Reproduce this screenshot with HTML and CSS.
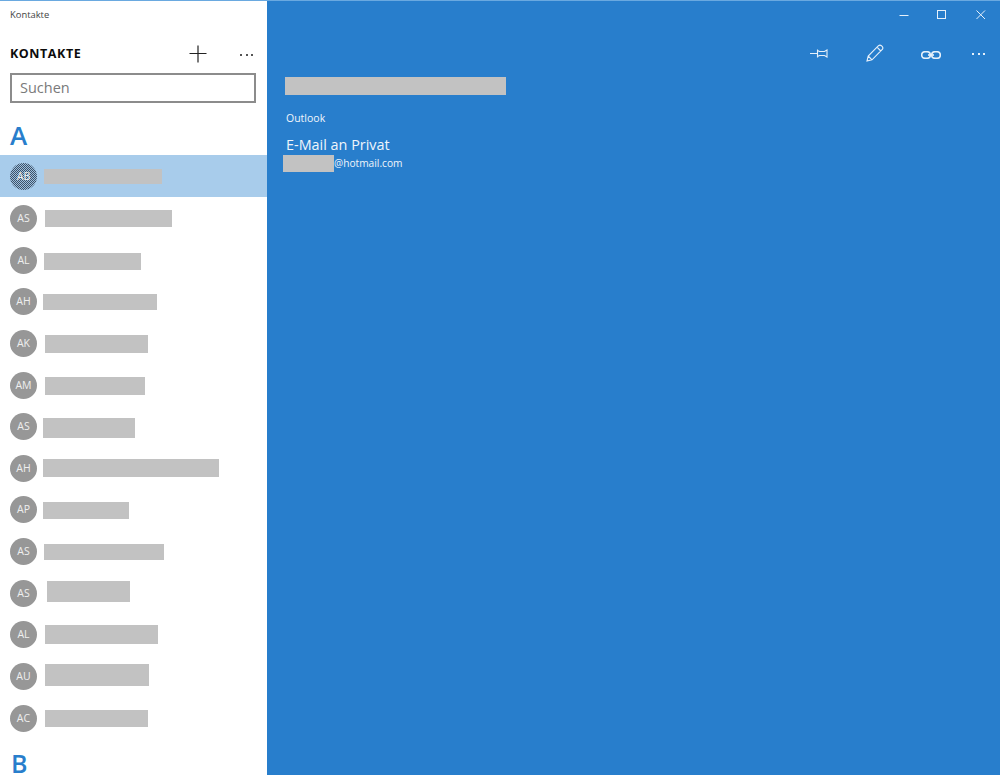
FILE: index.html
```html
<!DOCTYPE html>
<html lang="de">
<head>
<meta charset="utf-8">
<title>Kontakte</title>
<link rel="stylesheet" href="styles.css">
</head>
<body>
<div class="app">
  <aside class="sidebar">
    <div class="app-title">Kontakte</div>
    <header class="list-head">
      <h1 class="list-title">KONTAKTE</h1>
      <svg class="add-icon" width="18" height="18" viewBox="0 0 18 18"><path d="M9 0.5V17.5M0.5 8.5H17.5"/></svg>
      <span class="dots dots-dark"><i></i><i></i><i></i></span>
    </header>
    <div class="search">Suchen</div>
    <h2 class="letter letter-a">A</h2>
    <ul class="contacts">
      <li class="contact selected"><span class="avatar">AB</span><span class="bar b1"></span></li>
      <li class="contact"><span class="avatar">AS</span><span class="bar b2"></span></li>
      <li class="contact"><span class="avatar">AL</span><span class="bar b3"></span></li>
      <li class="contact"><span class="avatar">AH</span><span class="bar b4"></span></li>
      <li class="contact"><span class="avatar">AK</span><span class="bar b5"></span></li>
      <li class="contact"><span class="avatar">AM</span><span class="bar b6"></span></li>
      <li class="contact"><span class="avatar">AS</span><span class="bar b7"></span></li>
      <li class="contact"><span class="avatar">AH</span><span class="bar b8"></span></li>
      <li class="contact"><span class="avatar">AP</span><span class="bar b9"></span></li>
      <li class="contact"><span class="avatar">AS</span><span class="bar b10"></span></li>
      <li class="contact"><span class="avatar">AS</span><span class="bar b11"></span></li>
      <li class="contact"><span class="avatar">AL</span><span class="bar b12"></span></li>
      <li class="contact"><span class="avatar">AU</span><span class="bar b13"></span></li>
      <li class="contact"><span class="avatar">AC</span><span class="bar b14"></span></li>
    </ul>
    <h2 class="letter letter-b">B</h2>
  </aside>
  <main class="detail">
    <div class="window-controls">
      <span class="win-btn"><svg width="10" height="10" viewBox="0 0 10 10"><path d="M0.5 5.5H9.5"/></svg></span>
      <span class="win-btn"><svg width="10" height="10" viewBox="0 0 10 10"><rect x="0.5" y="0.5" width="8" height="8"/></svg></span>
      <span class="win-btn"><svg width="10" height="10" viewBox="0 0 10 10"><path d="M0.5 0.5L9 9M9 0.5L0.5 9"/></svg></span>
    </div>
    <div class="toolbar">
      <span class="tool tool-pin"><svg width="18" height="11" viewBox="0 0 18 11"><path d="M0 5.5H7.5M7.5 1.5V9.5M7.5 2.5L9.5 3.5H14.5L17 2V9L14.5 7.5H9.5L7.5 8.5"/></svg></span>
      <span class="tool tool-edit"><svg width="18" height="18" viewBox="0 0 18 18"><path d="M1 17L2.2 12L12.5 1.7Q14 0.6 15.4 1.7L16.3 2.6Q17.4 4 16.3 5.5L6 15.8ZM2.2 12L6 15.8M11 3.2L14.8 7"/></svg></span>
      <span class="tool tool-link"><svg width="20" height="8" viewBox="0 0 20 8"><rect x="0.7" y="0.7" width="8.6" height="6.6" rx="3.3"/><rect x="10.7" y="0.7" width="8.6" height="6.6" rx="3.3"/><path d="M7 4H13"/></svg></span>
      <span class="tool tool-more"><span class="dots"><i></i><i></i><i></i></span></span>
    </div>
    <div class="profile">
      <div class="bar name-bar"></div>
      <div class="source">Outlook</div>
      <div class="mail-label">E-Mail an Privat</div>
      <div class="mail-line"><span class="bar mail-bar"></span><span>@hotmail.com</span></div>
    </div>
  </main>
</div>
</body>
</html>
```
FILE: styles.css
```css
* { box-sizing: border-box; }
html, body { margin: 0; height: 100%; overflow: hidden; }
body { font-family: "Open Sans", "Noto Sans", "Liberation Sans", sans-serif; background: #fff; }
.app { display: flex; height: 775px; width: 1000px; }

.sidebar { width: 267px; flex: none; background: #fff; border-top: 1px solid #6aa9e0; overflow: hidden; color: #111; }
.app-title { height: 35px; padding: 7px 0 0 10px; font-size: 9.4px; line-height: 13px; color: #444; }
.list-head { height: 37px; display: flex; align-items: center; padding: 0 14px 0 10px; }
.list-title { margin: 0 0 2px; font-size: 12.5px; font-weight: 700; letter-spacing: 0.55px; line-height: 16px; flex: 1; color: #0c0c0c; }
.add-icon { fill: none; stroke: #222; stroke-width: 1.2; margin: 0 33px 1px 0; }
.dots { display: inline-flex; gap: 3.5px; }
.dots i { width: 2px; height: 2px; background: #e6f0fa; }
.dots-dark i { background: #555; }
.search { margin: 0 11px 0 10px; height: 30px; border: 2px solid #8c8c8c; padding-left: 8px; font-size: 14.5px; line-height: 26px; color: #7a7a7a; }
.letter { margin: 0; color: #287ecc; font-weight: 600; font-size: 26px; }
.letter-a { height: 52px; padding: 17px 0 0 10px; line-height: 30px; }
.letter-b { height: 37px; padding: 15px 0 0 11px; line-height: 20px; font-size: 25px; }

.contacts { list-style: none; margin: 0; padding: 0; display: grid; grid-auto-rows: 41.65px; }
.contact { display: flex; align-items: center; padding: 2px 0 0 10px; }
.contact.selected { background: #a8cceb; }
.avatar { flex: none; width: 27px; height: 27px; border-radius: 50%; background: #979797; color: #efefef; font-size: 10.5px; line-height: 27px; text-align: center; }
.selected .avatar { background: repeating-conic-gradient(#3f5368 0 25%, #9dbfdf 0 50%) 0 0 / 2px 2px; }
.bar { display: block; background: #c2c2c2; flex: none; }

.b1 { margin: 0 0 0 7px; width: 118px; height: 15px; }
.b2 { margin: 1px 0 0 8px; width: 127px; height: 17px; }
.b3 { margin: 2px 0 0 7px; width: 97px; height: 17px; }
.b4 { margin: 0 0 0 6px; width: 114px; height: 16px; }
.b5 { margin: 2px 0 0 8px; width: 103px; height: 18px; }
.b6 { margin: 2px 0 0 8px; width: 100px; height: 18px; }
.b7 { margin: 3px 0 0 6px; width: 92px; height: 20px; }
.b8 { margin: 0 0 0 6px; width: 176px; height: 18px; }
.b9 { margin: 2px 0 0 6px; width: 86px; height: 17px; }
.b10 { margin: 0 0 0 7px; width: 120px; height: 16px; }
.b11 { margin: 0 0 4px 10px; width: 83px; height: 21px; }
.b12 { margin: 0 0 0 8px; width: 113px; height: 19px; }
.b13 { margin: 0 0 4px 8px; width: 104px; height: 22px; }
.b14 { margin: 1px 0 0 8px; width: 103px; height: 17px; }

.detail { flex: 1; background: #287ecc; border-top: 1px solid #6aa9e0; color: #f0f5fb; }
.window-controls { display: flex; height: 27px; justify-content: flex-end; }
.win-btn { width: 38.5px; display: flex; align-items: center; justify-content: center; padding-top: 1px; }
.win-btn svg { fill: none; stroke: #e6f0fa; stroke-width: 1; }
.toolbar { display: flex; height: 49px; align-items: center; padding-left: 523px; }
.tool { display: flex; justify-content: center; align-items: center; height: 49px; }
.tool svg { fill: none; stroke: #e6f0fa; stroke-width: 1.1; }
.tool-pin { width: 56px; padding: 1px 0 0 1px; }
.tool-edit { width: 56px; padding-left: 1px; }
.tool-link { width: 56px; padding: 4px 0 0 1px; }
.tool-link svg { stroke-width: 1.6; }
.tool-more { width: 40px; padding: 3px 0 0 1px; }
.profile { padding-left: 18px; }
.bar.name-bar { width: 221px; height: 18px; }
.source { margin: 15px 0 0 1px; font-size: 10.5px; line-height: 16px; }
.mail-label { margin: 9px 0 0 1px; font-size: 14.4px; line-height: 20px; }
.mail-line { display: flex; align-items: center; margin: -1px 0 0 -2px; font-size: 10.2px; line-height: 17px; }
.mail-bar { width: 51px; height: 17px; margin-top: 1px; }
```
